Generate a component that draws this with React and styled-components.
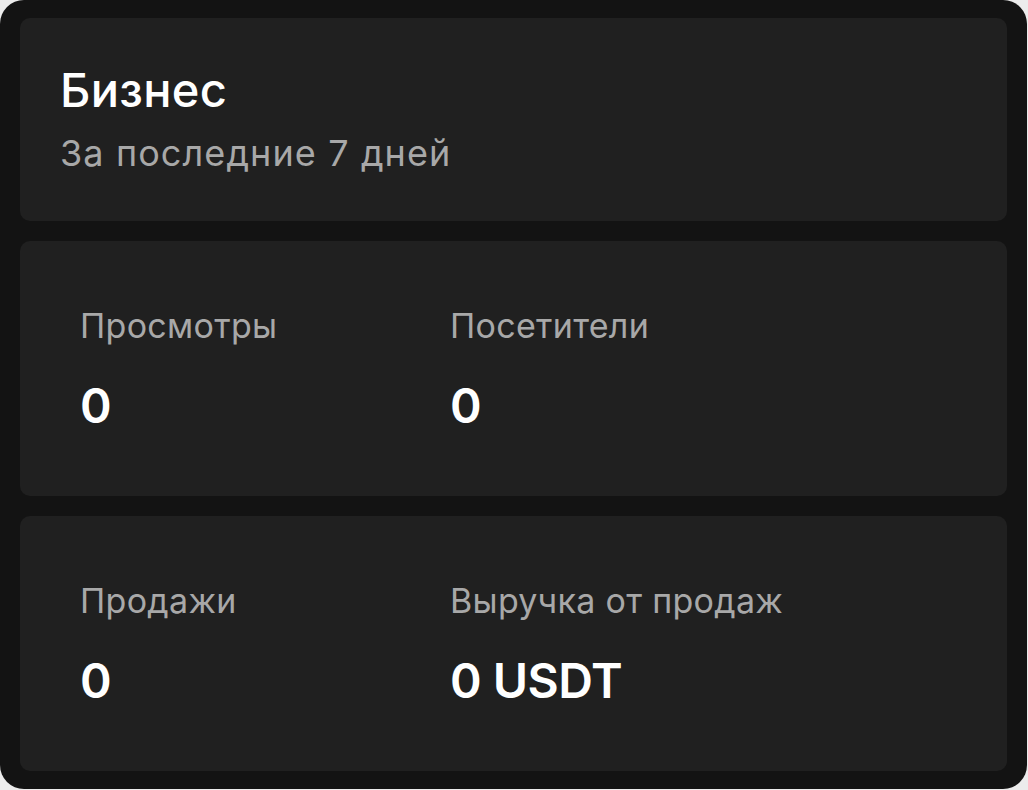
import styled, { createGlobalStyle } from 'styled-components'

const GlobalStyle = createGlobalStyle`
  html, body {
    margin: 0;
    padding: 0;
    background: #ececec;
    font-family: Inter, "Noto Sans", sans-serif;
  }
`
const Frame = styled.div`
  width: 1027px;
  height: 789px;
  box-sizing: border-box;
  padding: 18px 20px 17px 20px;
  background-color: #131313;
  border-radius: 24px;
  display: flex;
  flex-direction: column;
  gap: 20px;
`
const Card = styled.section`
  background-color: #202020;
  border-radius: 10px;
  box-sizing: border-box;
  height: ${(p) => p.$height}px;
  padding: ${(p) => p.$padding};
`
const Title = styled.h1`
  margin: 0;
  font-size: 47px;
  font-weight: 500;
  letter-spacing: 0.3px;
  color: #ffffff;
  line-height: 1.2;
`
const Subtitle = styled.div`
  margin-top: 14px;
  font-size: 36px;
  font-weight: 400;
  letter-spacing: 1.1px;
  color: #a8a8a8;
  line-height: 1.2;
`
const StatsRow = styled.div`
  display: grid;
  grid-template-columns: 370px 1fr;
`
const Label = styled.div`
  font-size: 34px;
  letter-spacing: 0.3px;
  color: #a8a8a8;
  line-height: 1.2;
`
const Value = styled.div`
  margin-top: 30px;
  font-size: 48px;
  font-weight: 600;
  letter-spacing: -0.5px;
  color: #ffffff;
  line-height: 1.2;
`

function Stat({ label, value }) {
  return (
    <div>
      <Label>{label}</Label>
      <Value>{value}</Value>
    </div>
  )
}

export default function App() {
  return (
    <>
      <GlobalStyle />
      <Frame>
        <Card $height={203} $padding="44px 40px 0 40px">
          <Title>Бизнес</Title>
          <Subtitle>За последние 7 дней</Subtitle>
        </Card>
        <Card $height={255} $padding="65px 60px 0 60px">
          <StatsRow>
            <Stat label="Просмотры" value="0" />
            <Stat label="Посетители" value="0" />
          </StatsRow>
        </Card>
        <Card $height={255} $padding="65px 60px 0 60px">
          <StatsRow>
            <Stat label="Продажи" value="0" />
            <Stat label="Выручка от продаж" value="0 USDT" />
          </StatsRow>
        </Card>
      </Frame>
    </>
  )
}
